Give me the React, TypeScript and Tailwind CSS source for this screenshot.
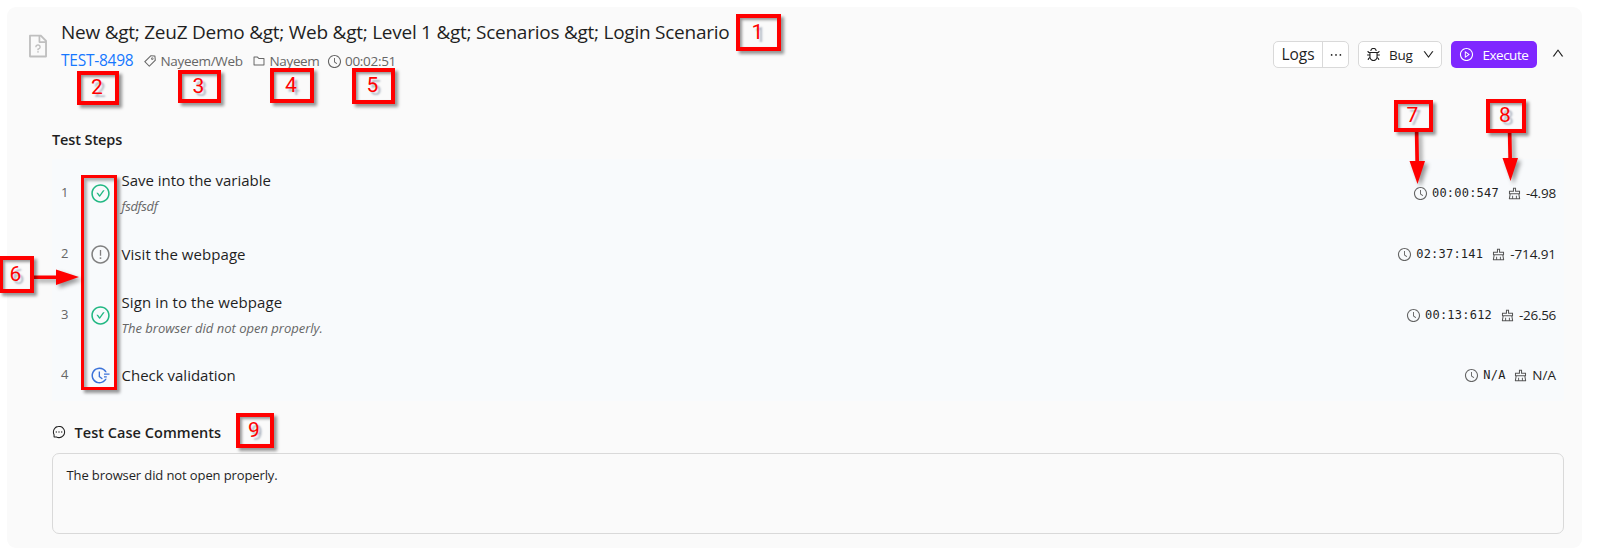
import React from "react";
import {
  AiOutlineBug,
  AiOutlineCheckCircle,
  AiOutlineClear,
  AiOutlineClockCircle,
  AiOutlineDown,
  AiOutlineEllipsis,
  AiOutlineExclamationCircle,
  AiOutlineFieldTime,
  AiOutlineFileUnknown,
  AiOutlineFolder,
  AiOutlineMessage,
  AiOutlinePlayCircle,
  AiOutlineTag,
  AiOutlineUp,
} from "react-icons/ai";

type Step = {
  title: string;
  titleClass?: string;
  note?: string;
  noteClass?: string;
  row: string;
  icon: React.ReactNode;
  time: string;
  timeClass: string;
  delta: string;
  deltaClass: string;
};

const passed = <AiOutlineCheckCircle className="size-[21px] text-[#22b883]" />;

const steps: Step[] = [
  {
    title: "Save into the variable",
    titleClass: "tracking-[-0.03px]",
    note: "fsdfsdf",
    noteClass: "tracking-[-0.35px]",
    row: "h-[68px]",
    icon: passed,
    time: "00:00:547",
    timeClass: "w-[68px]",
    delta: "-4.98",
    deltaClass: "tracking-[-0.2px]",
  },
  {
    title: "Visit the webpage",
    titleClass: "tracking-[0.06px]",
    row: "h-[54px]",
    icon: <AiOutlineExclamationCircle className="size-[21px] text-[#808080]" />,
    time: "02:37:141",
    timeClass: "w-[68px]",
    delta: "-714.91",
    deltaClass: "tracking-[-0.1px]",
  },
  {
    title: "Sign in to the webpage",
    titleClass: "tracking-[0.1px]",
    note: "The browser did not open properly.",
    noteClass: "tracking-[-0.01px]",
    row: "h-[68px]",
    icon: passed,
    time: "00:13:612",
    timeClass: "w-[68px]",
    delta: "-26.56",
    deltaClass: "tracking-[-0.3px]",
  },
  {
    title: "Check validation",
    row: "h-[52px]",
    icon: <AiOutlineFieldTime className="size-[21px] text-[#3b72d9]" />,
    time: "N/A",
    timeClass: "w-[23px]",
    delta: "N/A",
    deltaClass: "",
  },
];

const markers = [
  { label: "1", box: "left-[736px] top-[14px] w-[45px] h-[37px]" },
  { label: "2", box: "left-[77px] top-[71px] w-[42px] h-[34px]" },
  { label: "3", box: "left-[178px] top-[70px] w-[43px] h-[33px]" },
  { label: "4", box: "left-[270px] top-[68px] w-[44px] h-[35px]" },
  { label: "5", box: "left-[352px] top-[68px] w-[43px] h-[36px]" },
  { label: "6", box: "left-[-1px] top-[256px] w-[35px] h-[37px]" },
  { label: "7", box: "left-[1394px] top-[100px] w-[39px] h-[32px]" },
  { label: "8", box: "left-[1486px] top-[99px] w-[40px] h-[34px]" },
  { label: "9", box: "left-[236px] top-[413px] w-[38px] h-[35px]" },
];

function StepRow({ step, index }: { step: Step; index: number }) {
  return (
    <div className={`flex items-center pr-[8px] pl-[9px] ${step.row}`}>
      <span className="w-[28.5px] text-[13px] text-[#666]">{index}</span>
      <span className="flex w-[32px] items-center">{step.icon}</span>
      <div className="flex flex-1 flex-col">
        <span className={`text-[15px] leading-[25px] text-[#1f1f1f] ${step.titleClass ?? ""}`}>{step.title}</span>
        {step.note && (
          <span className={`text-[13px] leading-[26px] text-[#666] italic ${step.noteClass}`}>{step.note}</span>
        )}
      </div>
      <div className="flex items-center text-[#1f1f1f]">
        <AiOutlineClockCircle className="mr-[4px] size-[15px] text-[#666]" />
        <span className={`font-['DejaVu_Sans_Mono',monospace] text-[12px] tracking-[0.22px] ${step.timeClass}`}>
          {step.time}
        </span>
        <AiOutlineClear className="mr-[4px] ml-[7px] size-[15px] text-[#555]" />
        <span className={`pt-px text-[13.5px] ${step.deltaClass}`}>{step.delta}</span>
      </div>
    </div>
  );
}

function Markers() {
  return (
    <div className="pointer-events-none absolute inset-0 overflow-hidden">
      <div className="absolute top-[175px] left-[81px] h-[215px] w-[36px] border-[3px] border-[#ff0000] shadow-[3px_3px_3px_rgba(0,0,0,0.4),inset_3px_3px_3px_rgba(0,0,0,0.3)]" />
      <svg
        className="absolute inset-0 h-[552px] w-[1602px] drop-shadow-[3px_3px_2px_rgba(0,0,0,0.4)]"
        viewBox="0 0 1602 552"
        fill="#ff0000"
      >
        <path d="M34 275.5H56V269.5L79 277L56 285V279H34Z" />
        <path d="M1414.8 132H1418.5L1419 161H1425L1417.5 184L1409.5 161H1415.3Z" />
        <path d="M1507.8 133H1511.5L1512 158H1518L1510.5 181L1502.5 158H1508.3Z" />
      </svg>
      {markers.map((m) => (
        <div
          key={m.label}
          className={`absolute flex items-center justify-center border-4 border-[#ff0000] pr-[2px] pb-px font-[Roboto,sans-serif] text-[21px] leading-none text-[#ff0000] shadow-[3px_3px_3px_rgba(0,0,0,0.4),inset_2px_2px_3px_rgba(0,0,0,0.4)] [text-shadow:3px_3px_2px_rgba(60,80,110,0.4)] ${m.box}`}
        >
          {m.label}
        </div>
      ))}
    </div>
  );
}

export default function App() {
  return (
    <div className="relative h-[552px] w-[1602px] overflow-hidden bg-white pt-[7px] pl-[7px] font-['Open_Sans','Noto_Sans',sans-serif] whitespace-nowrap text-[#1f1f1f]">
      <section className="h-[541px] w-[1575px] rounded-[9px] bg-[#fafafa]">
        <header className="flex h-[112px] items-start pl-[18px]">
          <AiOutlineFileUnknown className="mt-[26px] size-[26px] text-[#bfbfbf]" />
          <div className="ml-[10px] flex-1 pt-[11px]">
            <h1 className="text-[19px] leading-[29px] tracking-[-0.25px]">
              {"New &gt; ZeuZ Demo &gt; Web &gt; Level 1 &gt; Scenarios &gt; Login Scenario"}
            </h1>
            <div className="flex h-[28px] items-center text-[13.5px] text-[#666]">
              <a className="w-[81.5px] text-[15.5px] tracking-[-0.25px] text-[#1677ff]">TEST-8498</a>
              <AiOutlineTag className="size-[14px]" />
              <span className="ml-[4px] w-[91px] tracking-[-0.31px]">Nayeem/Web</span>
              <AiOutlineFolder className="size-[14px]" />
              <span className="ml-[4px] w-[57px] tracking-[-0.35px]">Nayeem</span>
              <AiOutlineClockCircle className="size-[15px]" />
              <span className="ml-[3.5px] tracking-[-0.3px]">00:02:51</span>
            </div>
          </div>
          <div className="mt-[34px] flex items-center pr-[17px]">
            <div className="flex h-[27px] w-[76px] rounded-[5px] border border-[#d9d9d9] bg-white">
              <button className="flex w-[49px] items-center justify-center border-r border-[#d9d9d9] pt-px text-[15.5px]">
                Logs
              </button>
              <button className="flex flex-1 items-center justify-center">
                <AiOutlineEllipsis className="size-[16px]" />
              </button>
            </div>
            <button className="ml-[9px] flex h-[27px] w-[84px] items-center rounded-[5px] border border-[#d9d9d9] bg-white pl-[7px] text-[13.5px]">
              <AiOutlineBug className="size-[15px] shrink-0" />
              <span className="ml-[8px] w-[33px] shrink-0 pt-px text-left tracking-[-0.3px]">Bug</span>
              <AiOutlineDown className="size-[13px] shrink-0" />
            </button>
            <button className="ml-[9px] flex h-[27px] w-[86px] items-center rounded-[5px] bg-[#7f27ff] pl-[8px] text-[13.5px] text-white">
              <AiOutlinePlayCircle className="size-[15px]" />
              <span className="ml-[8.5px] pt-px tracking-[-0.5px]">Execute</span>
            </button>
            <AiOutlineUp className="mb-[3px] ml-[14px] size-[14px]" />
          </div>
        </header>

        <div className="pr-[18px] pl-[45px]">
          <h2 className="h-[40px] text-[14.5px] leading-[42px] font-semibold tracking-[-0.1px]">Test Steps</h2>
          <div className="h-[242px] bg-[#f8fafc]">
            {steps.map((step, i) => (
              <StepRow key={step.title} step={step} index={i + 1} />
            ))}
          </div>
          <h2 className="flex h-[52px] items-center pt-[11px] text-[14.5px] font-semibold tracking-[0.04px]">
            <AiOutlineMessage className="mr-[8.5px] mb-px size-[14px]" />
            Test Case Comments
          </h2>
          <div className="h-[81px] rounded-[7px] border border-[#d9d9d9] px-[13.5px] pt-[10px] text-[13px] leading-[22px] tracking-[-0.11px]">
            The browser did not open properly.
          </div>
        </div>
      </section>
      <Markers />
    </div>
  );
}
